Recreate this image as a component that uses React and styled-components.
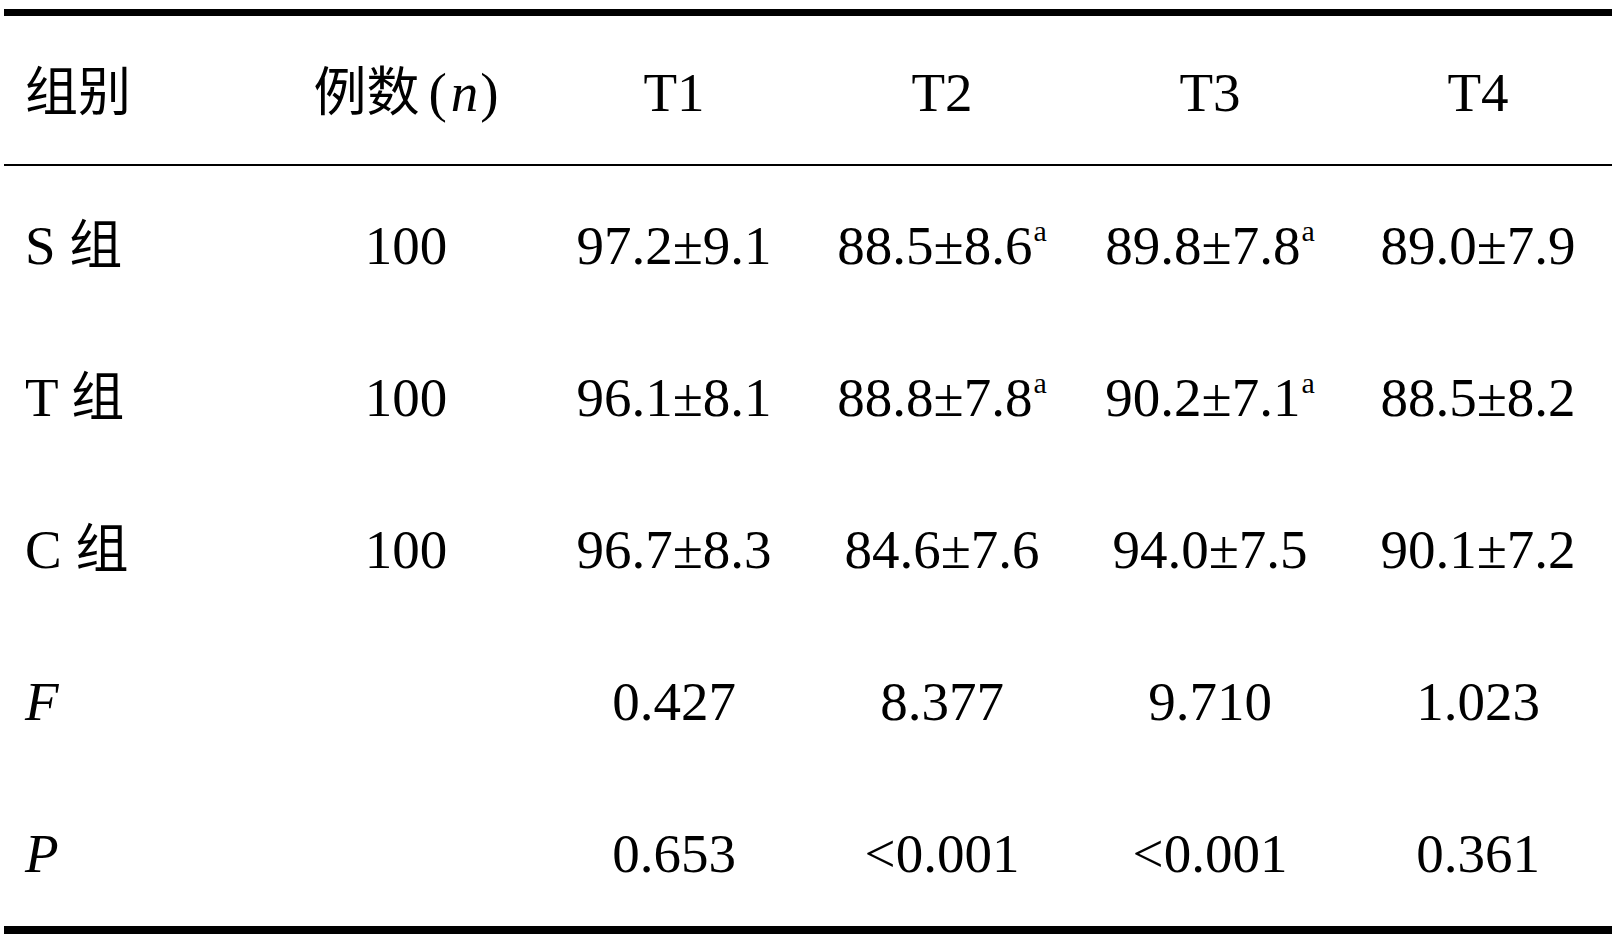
import React from "react";
import styled, { createGlobalStyle } from "styled-components";

const Global = createGlobalStyle`
  html, body { margin: 0; padding: 0; background: #ffffff; }
  body { font-family: "Liberation Serif", "Noto Sans CJK SC", serif; color: #000; }
`;

const Page = styled.div`
  width: 1622px;
  height: 941px;
  padding: 9px 0 0 4px;
  box-sizing: border-box;
  background: #fff;
  overflow: hidden;
`;

const Table = styled.table`
  width: 1608px;
  table-layout: fixed;
  border-collapse: separate;
  border-spacing: 0;
  font-family: "Liberation Serif", "Noto Sans CJK SC", serif;
  font-size: 55px;
  line-height: 55px;
  color: #000;
`;

const HeadCell = styled.th`
  font-weight: normal;
  text-align: ${(p) => (p.$left ? "left" : "center")};
  padding: 49px 0 44px ${(p) => (p.$left ? "21px" : "0")};
  height: 55px;
  border-top: 7px solid #000;
  border-bottom: 2px solid #000;
  white-space: nowrap;
  vertical-align: top;
`;

const Cell = styled.td`
  text-align: ${(p) => (p.$left ? "left" : "center")};
  padding: 52px 0 45px ${(p) => (p.$left ? "21px" : "0")};
  height: 55px;
  white-space: nowrap;
  vertical-align: top;
  border-bottom: ${(p) => (p.$last ? "8px solid #000" : "none")};
`;

const Cjk = styled.span`
  font-family: "Noto Sans CJK SC", sans-serif;
  font-size: 53px;
  line-height: 0;
`;

const Var = styled.i`
  font-style: italic;
  font-family: "Liberation Serif", serif;
  margin-left: ${(p) => p.$ml || "0"};
`;

const Paren = styled.span`
  margin-left: ${(p) => p.$ml || "0"};
`;

const Sup = styled.span`
  font-size: 30px;
  line-height: 0;
  vertical-align: 23px;
  margin-left: 1px;
`;

const cols = ["T1", "T2", "T3", "T4"];

const rows = [
  {
    label: (
      <>
        S <Cjk>组</Cjk>
      </>
    ),
    n: "100",
    vals: [["97.2±9.1"], ["88.5±8.6", "a"], ["89.8±7.8", "a"], ["89.0±7.9"]],
  },
  {
    label: (
      <>
        T <Cjk>组</Cjk>
      </>
    ),
    n: "100",
    vals: [["96.1±8.1"], ["88.8±7.8", "a"], ["90.2±7.1", "a"], ["88.5±8.2"]],
  },
  {
    label: (
      <>
        C <Cjk>组</Cjk>
      </>
    ),
    n: "100",
    vals: [["96.7±8.3"], ["84.6±7.6"], ["94.0±7.5"], ["90.1±7.2"]],
  },
  {
    label: <Var>F</Var>,
    n: "",
    vals: [["0.427"], ["8.377"], ["9.710"], ["1.023"]],
  },
  {
    label: <Var>P</Var>,
    n: "",
    vals: [["0.653"], ["<0.001"], ["<0.001"], ["0.361"]],
  },
];

export default function App() {
  return (
    <Page>
      <Global />
      <Table>
        <thead>
          <tr>
            <HeadCell $left>
              <Cjk>组别</Cjk>
            </HeadCell>
            <HeadCell>
              <Cjk>例数</Cjk>
              <Paren $ml="9px">(</Paren>
              <Var $ml="4px">n</Var>
              <Paren $ml="2px">)</Paren>
            </HeadCell>
            {cols.map((c) => (
              <HeadCell key={c}>{c}</HeadCell>
            ))}
          </tr>
        </thead>
        <tbody>
          {rows.map((r, i) => {
            const last = i === rows.length - 1;
            return (
              <tr key={i}>
                <Cell $left $last={last}>
                  {r.label}
                </Cell>
                <Cell $last={last}>{r.n}</Cell>
                {r.vals.map(([v, s], j) => (
                  <Cell key={j} $last={last}>
                    {v}
                    {s && <Sup>{s}</Sup>}
                  </Cell>
                ))}
              </tr>
            );
          })}
        </tbody>
      </Table>
    </Page>
  );
}
